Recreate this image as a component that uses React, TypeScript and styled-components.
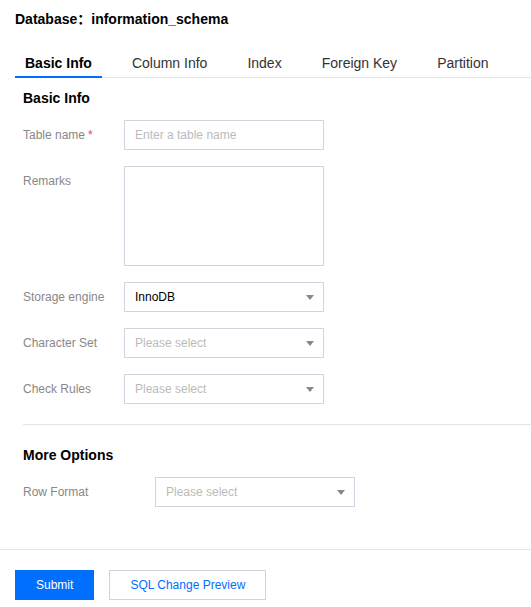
import React from 'react';
import styled, { createGlobalStyle } from 'styled-components';

const GlobalStyle = createGlobalStyle`
  html, body {
    margin: 0;
    padding: 0;
    background: #fff;
  }
  body {
    font-family: 'Liberation Sans', Arial, 'Noto Sans CJK SC', sans-serif;
    color: #000;
  }
  * {
    box-sizing: border-box;
  }
`;

const Page = styled.div`
  width: 531px;
  min-height: 607px;
  display: flex;
  flex-direction: column;
`;

const Title = styled.h1`
  margin: 9px 0 0 15px;
  font-size: 14px;
  line-height: 20px;
  font-weight: bold;
  color: #000;
`;

const TabBar = styled.div`
  display: flex;
  gap: 20px;
  margin: 19px 0 0 15px;
  border-bottom: 1px solid #e5e5e5;
`;

const Tab = styled.div<{ $active?: boolean }>`
  position: relative;
  height: 29px;
  line-height: 29px;
  padding: 1px 10px 0;
  font-size: 14px;
  color: ${(p) => (p.$active ? '#000' : '#333')};
  font-weight: ${(p) => (p.$active ? 'bold' : 'normal')};
  cursor: pointer;

  &::after {
    content: '';
    display: ${(p) => (p.$active ? 'block' : 'none')};
    position: absolute;
    left: 0;
    right: 0;
    bottom: -1px;
    height: 2px;
    background: #006eff;
  }
`;

const Body = styled.div`
  padding-left: 23px;
  flex: 1;
`;

const SectionTitle = styled.h2`
  margin: 10px 0 12px;
  font-size: 14px;
  line-height: 20px;
  font-weight: bold;
  color: #000;
`;

const Fields = styled.div`
  display: flex;
  flex-direction: column;
  gap: 16px;
`;

const Row = styled.div`
  display: flex;
  align-items: flex-start;
`;

const Label = styled.label<{ $width: number }>`
  width: ${(p) => p.$width}px;
  flex-shrink: 0;
  font-size: 12px;
  line-height: 30px;
  color: #888;
`;

const Required = styled.span`
  color: #e54545;
  margin-left: 3px;
`;

const Input = styled.input`
  width: 200px;
  height: 30px;
  padding: 0 10px;
  border: 1px solid #cfd5de;
  border-radius: 0;
  font-family: inherit;
  font-size: 12px;
  color: #000;
  outline: none;

  &::placeholder {
    color: #bbb;
  }
`;

const TextArea = styled.textarea`
  width: 200px;
  height: 100px;
  padding: 6px 10px;
  border: 1px solid #cfd5de;
  border-radius: 0;
  font-family: inherit;
  font-size: 12px;
  resize: none;
  outline: none;
`;

const SelectBox = styled.div`
  width: 200px;
  height: 30px;
  display: flex;
  align-items: center;
  justify-content: space-between;
  padding: 0 9px 0 10px;
  border: 1px solid #cfd5de;
  font-size: 12px;
  cursor: pointer;
`;

const SelectValue = styled.span<{ $placeholder?: boolean }>`
  color: ${(p) => (p.$placeholder ? '#bbb' : '#000')};
`;

const Caret = styled.span`
  width: 0;
  height: 0;
  border-left: 4px solid transparent;
  border-right: 4px solid transparent;
  border-top: 5px solid #888;
  margin-top: 1px;
`;

const Divider = styled.div`
  height: 1px;
  background: #e5e5e5;
  margin: 20px 0 0;
`;

const MoreTitle = styled(SectionTitle)`
  margin-top: 20px;
`;

const Footer = styled.div`
  border-top: 1px solid #e5e5e5;
  margin-top: 41px;
  padding: 20px 15px 7px;
  display: flex;
  gap: 15px;
`;

const Button = styled.button<{ $primary?: boolean }>`
  height: 30px;
  padding: 0 20px;
  min-width: ${(p) => (p.$primary ? '78px' : '157px')};
  font-family: inherit;
  font-size: 12px;
  border: 1px solid ${(p) => (p.$primary ? '#006eff' : '#cfd5de')};
  background: ${(p) => (p.$primary ? '#006eff' : '#fff')};
  color: ${(p) => (p.$primary ? '#fff' : '#006eff')};
  border-radius: 0;
  cursor: pointer;
`;

const Select: React.FC<{ value?: string }> = ({ value }) => (
  <SelectBox>
    <SelectValue $placeholder={!value}>{value || 'Please select'}</SelectValue>
    <Caret />
  </SelectBox>
);

const tabs = ['Basic Info', 'Column Info', 'Index', 'Foreign Key', 'Partition'];

const App: React.FC = () => {
  return (
    <Page>
      <GlobalStyle />
      <Title>Database：information_schema</Title>
      <TabBar>
        {tabs.map((t, i) => (
          <Tab key={t} $active={i === 0}>
            {t}
          </Tab>
        ))}
      </TabBar>

      <Body>
        <SectionTitle>Basic Info</SectionTitle>
        <Fields>
          <Row>
            <Label $width={101}>
              Table name<Required>*</Required>
            </Label>
            <Input placeholder="Enter a table name" />
          </Row>
          <Row>
            <Label $width={101}>Remarks</Label>
            <TextArea />
          </Row>
          <Row>
            <Label $width={101}>Storage engine</Label>
            <Select value="InnoDB" />
          </Row>
          <Row>
            <Label $width={101}>Character Set</Label>
            <Select />
          </Row>
          <Row>
            <Label $width={101}>Check Rules</Label>
            <Select />
          </Row>
        </Fields>

        <Divider />

        <MoreTitle>More Options</MoreTitle>
        <Row>
          <Label $width={132}>Row Format</Label>
          <Select />
        </Row>
      </Body>

      <Footer>
        <Button $primary>Submit</Button>
        <Button>SQL Change Preview</Button>
      </Footer>
    </Page>
  );
};

export default App;
